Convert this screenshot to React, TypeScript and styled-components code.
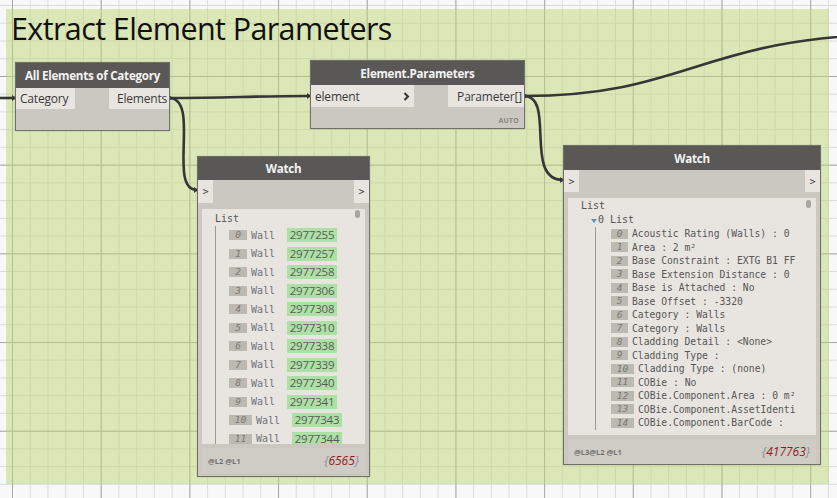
import styled, { createGlobalStyle } from "styled-components";

const GlobalStyle = createGlobalStyle`
  html, body {
    margin: 0;
    padding: 0;
    background: #f8f8f8;
  }
`;

const ui = `"Open Sans", "Noto Sans", sans-serif`;
const mono = `"DejaVu Sans Mono", "Liberation Mono", monospace`;

const Canvas = styled.div`
  position: relative;
  width: 837px;
  height: 498px;
  overflow: hidden;
  background-color: #f8f8f8;
  background-image:
    linear-gradient(to right, #a8a8a8 1px, transparent 1px),
    linear-gradient(to bottom, #a8a8a8 1px, transparent 1px),
    linear-gradient(to right, #dcdcdc 1px, transparent 1px),
    linear-gradient(to bottom, #dcdcdc 1px, transparent 1px);
  background-size: 88.7px 88.7px, 88.7px 88.7px, 17.74px 17.74px, 17.74px 17.74px;
  background-position: 12px 0, 0 76px, 12px 0, 0 5px;
`;

const Group = styled.div`
  position: absolute;
  left: 6px;
  top: 9px;
  width: 823px;
  height: 475px;
  background: rgba(192, 214, 118, 0.5);
`;

const Title = styled.h1`
  margin: 0;
  padding: 1px 0 0 5px;
  font-family: ${ui};
  font-weight: 400;
  font-size: 30.5px;
  line-height: 36px;
  letter-spacing: -0.6px;
  color: #111;
`;

const Wires = styled.svg`
  position: absolute;
  left: 0;
  top: 0;
  pointer-events: none;
`;

const Node = styled.div<{ $x: number; $y: number; $w: number; $h: number }>`
  position: absolute;
  left: ${(p) => p.$x}px;
  top: ${(p) => p.$y}px;
  width: ${(p) => p.$w}px;
  height: ${(p) => p.$h}px;
  box-sizing: border-box;
  border: 1px solid #716f6c;
  background: #cbc7c1;
  display: flex;
  flex-direction: column;
  font-family: ${ui};
  box-shadow: 0 0 0 0.5px rgba(0, 0, 0, 0.1);
`;

const Header = styled.div<{ $h: number }>`
  height: ${(p) => p.$h}px;
  flex: none;
  background: #5a5856;
  color: #f3f3f3;
  font-weight: 700;
  font-size: 11.6px;
  letter-spacing: -0.25px;
  display: flex;
  align-items: center;
  justify-content: center;
`;

const PortRow = styled.div<{ $h: number }>`
  height: ${(p) => p.$h}px;
  flex: none;
  display: flex;
  justify-content: space-between;
`;

const Port = styled.div<{ $w: number; $right?: boolean }>`
  width: ${(p) => p.$w}px;
  box-sizing: border-box;
  background: #e8e5e0;
  display: flex;
  align-items: center;
  justify-content: ${(p) => (p.$right ? "flex-end" : "space-between")};
  padding: 0 ${(p) => (p.$right ? 2 : 4)}px 0 4px;
  font-size: 12px;
  color: #3a3a3a;
  letter-spacing: -0.2px;
`;

const WatchPort = styled.div`
  width: 15px;
  background: #e8e5e0;
  display: flex;
  align-items: center;
  justify-content: center;
  font-family: ${mono};
  font-size: 10px;
  color: #444;
`;

const Auto = styled.div`
  margin-top: auto;
  padding: 0 5px 3px 0;
  text-align: right;
  font-size: 7px;
  font-weight: 700;
  color: #8a8784;
  letter-spacing: 0.2px;
`;

const Content = styled.div<{ $h: number; $pad: number }>`
  position: relative;
  box-sizing: border-box;
  height: ${(p) => p.$h}px;
  margin: 6px 4px 0 4px;
  padding-top: ${(p) => p.$pad}px;
  background: #e8e5e0;
  overflow: hidden;
  font-family: ${mono};
  color: #5a5a5a;
`;

const Thumb = styled.div<{ $top: number }>`
  position: absolute;
  right: 5px;
  top: ${(p) => p.$top}px;
  width: 5px;
  height: 8px;
  border-radius: 3px;
  background: #a9a6a2;
`;

const ListHead = styled.div<{ $left: number; $size: number }>`
  padding-left: ${(p) => p.$left}px;
  font-size: ${(p) => p.$size}px;
  line-height: 14px;
  color: #555;
`;

const Tree = styled.div<{ $left: number }>`
  margin-left: ${(p) => p.$left}px;
  border-left: 1px solid #9c9994;
`;

const Row = styled.div<{ $h: number; $indent: number }>`
  height: ${(p) => p.$h}px;
  display: flex;
  align-items: center;
  padding-left: ${(p) => p.$indent}px;
  white-space: nowrap;
`;

const Index = styled.span<{ $w: number }>`
  width: ${(p) => p.$w}px;
  height: 10px;
  flex: none;
  background: #bcb8b2;
  color: #7c7771;
  font-style: italic;
  font-size: 9.5px;
  line-height: 10px;
  text-align: center;
  margin-right: 4px;
`;

const WallLabel = styled.span`
  width: 36px;
  flex: none;
  font-size: 10px;
  color: #6c717a;
`;

const IdBox = styled.span`
  width: 50px;
  height: 14px;
  flex: none;
  background: #ace0a5;
  font-family: ${ui};
  font-size: 11.5px;
  line-height: 14px;
  color: #5a5a5a;
  text-align: center;
  letter-spacing: -0.2px;
`;

const ParamText = styled.span`
  font-size: 9.7px;
  color: #555;
`;

const Footer = styled.div`
  height: 25px;
  margin: 4px 4px 0 4px;
  background: #cfcbc5;
  display: flex;
  align-items: center;
  justify-content: space-between;
  padding: 0 6px 0 6px;
`;

const Levels = styled.span`
  font-family: ${ui};
  font-size: 7.5px;
  font-weight: 700;
  color: #727272;
`;

const Count = styled.span`
  font-family: ${ui};
  font-style: italic;
  font-size: 12px;
  color: #8a8fa0;
  b {
    font-weight: 400;
    color: #8c1c1c;
  }
`;

const Expand = styled.span`
  font-size: 10px;
  color: #555;
  i {
    display: inline-block;
    width: 0;
    height: 0;
    border-left: 3px solid transparent;
    border-right: 3px solid transparent;
    border-top: 4px solid #5c8fd0;
    margin-right: 1px;
    vertical-align: 0;
  }
`;

const Chevron = () => (
  <svg width="7" height="9" viewBox="0 0 7 9">
    <path d="M1.5 1 L5 4.5 L1.5 8" stroke="#333" strokeWidth="2" fill="none" />
  </svg>
);

const wallIds = [
  "2977255", "2977257", "2977258", "2977306", "2977308", "2977310",
  "2977338", "2977339", "2977340", "2977341", "2977343", "2977344",
];

// visible part only - the watch cuts the long values at its right edge
const params = [
  "Acoustic Rating (Walls) : 0",
  "Area : 2 m²",
  "Base Constraint : EXTG B1 FF",
  "Base Extension Distance : 0",
  "Base is Attached : No",
  "Base Offset : -3320",
  "Category : Walls",
  "Category : Walls",
  "Cladding Detail : <None>",
  "Cladding Type :",
  "Cladding Type : (none)",
  "COBie : No",
  "COBie.Component.Area : 0 m²",
  "COBie.Component.AssetIdenti",
  "COBie.Component.BarCode :",
];

const wire = { stroke: "#363636", strokeWidth: 2.6, fill: "none" };

export default function App() {
  return (
    <Canvas>
      <GlobalStyle />
      <Group>
        <Title>Extract Element Parameters</Title>
      </Group>

      <Wires width="837" height="498" viewBox="0 0 837 498">
        <path d="M0 98 L15 98" {...wire} />
        <path d="M169 98 C 230 98, 250 96, 310 96" {...wire} />
        <path d="M169 98 C 201 98, 167 190, 197 190" {...wire} />
        <path d="M524 96 C 690 96, 700 36, 900 34" {...wire} />
        <path d="M524 96 C 556 96, 523 180, 563 180" {...wire} />
        <path d="M12 95 L16 98 L12 101 Z" fill="#363636" />
        <path d="M169 95 L173 98 L169 101 Z" fill="#363636" />
        <path d="M307 93 L311 96 L307 99 Z" fill="#363636" />
        <path d="M524 93 L528 96 L524 99 Z" fill="#363636" />
        <path d="M194 187 L198 190 L194 193 Z" fill="#363636" />
        <path d="M560 177 L564 180 L560 183 Z" fill="#363636" />
      </Wires>

      <Node $x={15} $y={62} $w={155} $h={69}>
        <Header $h={25}>All Elements of Category</Header>
        <PortRow $h={21}>
          <Port $w={59}>Category</Port>
          <Port $w={60} $right>Elements</Port>
        </PortRow>
      </Node>

      <Node $x={310} $y={60} $w={215} $h={69}>
        <Header $h={24}>Element.Parameters</Header>
        <PortRow $h={22}>
          <Port $w={103}>
            element <Chevron />
          </Port>
          <Port $w={76} $right>Parameter[]</Port>
        </PortRow>
        <Auto>AUTO</Auto>
      </Node>

      <Node $x={197} $y={156} $w={173} $h={321}>
        <Header $h={23}>Watch</Header>
        <PortRow $h={23}>
          <WatchPort>&gt;</WatchPort>
          <WatchPort>&gt;</WatchPort>
        </PortRow>
        <Content $h={235} $pad={3}>
          <Thumb $top={1} />
          <ListHead $left={13} $size={10}>List</ListHead>
          <Tree $left={13}>
            {wallIds.map((id, i) => (
              <Row key={id} $h={18.5} $indent={13}>
                <Index $w={i < 10 ? 18 : 23}>{i}</Index>
                <WallLabel>Wall</WallLabel>
                <IdBox>{id}</IdBox>
              </Row>
            ))}
          </Tree>
        </Content>
        <Footer>
          <Levels>@L2 @L1</Levels>
          <Count>
            {"{"}
            <b>6565</b>
            {"}"}
          </Count>
        </Footer>
      </Node>

      <Node $x={563} $y={145} $w={258} $h={320}>
        <Header $h={24}>Watch</Header>
        <PortRow $h={22}>
          <WatchPort>&gt;</WatchPort>
          <WatchPort>&gt;</WatchPort>
        </PortRow>
        <Content $h={238} $pad={1}>
          <Thumb $top={2} />
          <ListHead $left={13} $size={10}>List</ListHead>
          <ListHead $left={23} $size={10}>
            <Expand>
              <i />0 List
            </Expand>
          </ListHead>
          <Tree $left={27}>
            {params.map((t, i) => (
              <Row key={i} $h={13.5} $indent={15}>
                <Index $w={i < 10 ? 17 : 23}>{i}</Index>
                <ParamText>{t}</ParamText>
              </Row>
            ))}
          </Tree>
        </Content>
        <Footer>
          <Levels>@L3@L2 @L1</Levels>
          <Count>
            {"{"}
            <b>417763</b>
            {"}"}
          </Count>
        </Footer>
      </Node>
    </Canvas>
  );
}
